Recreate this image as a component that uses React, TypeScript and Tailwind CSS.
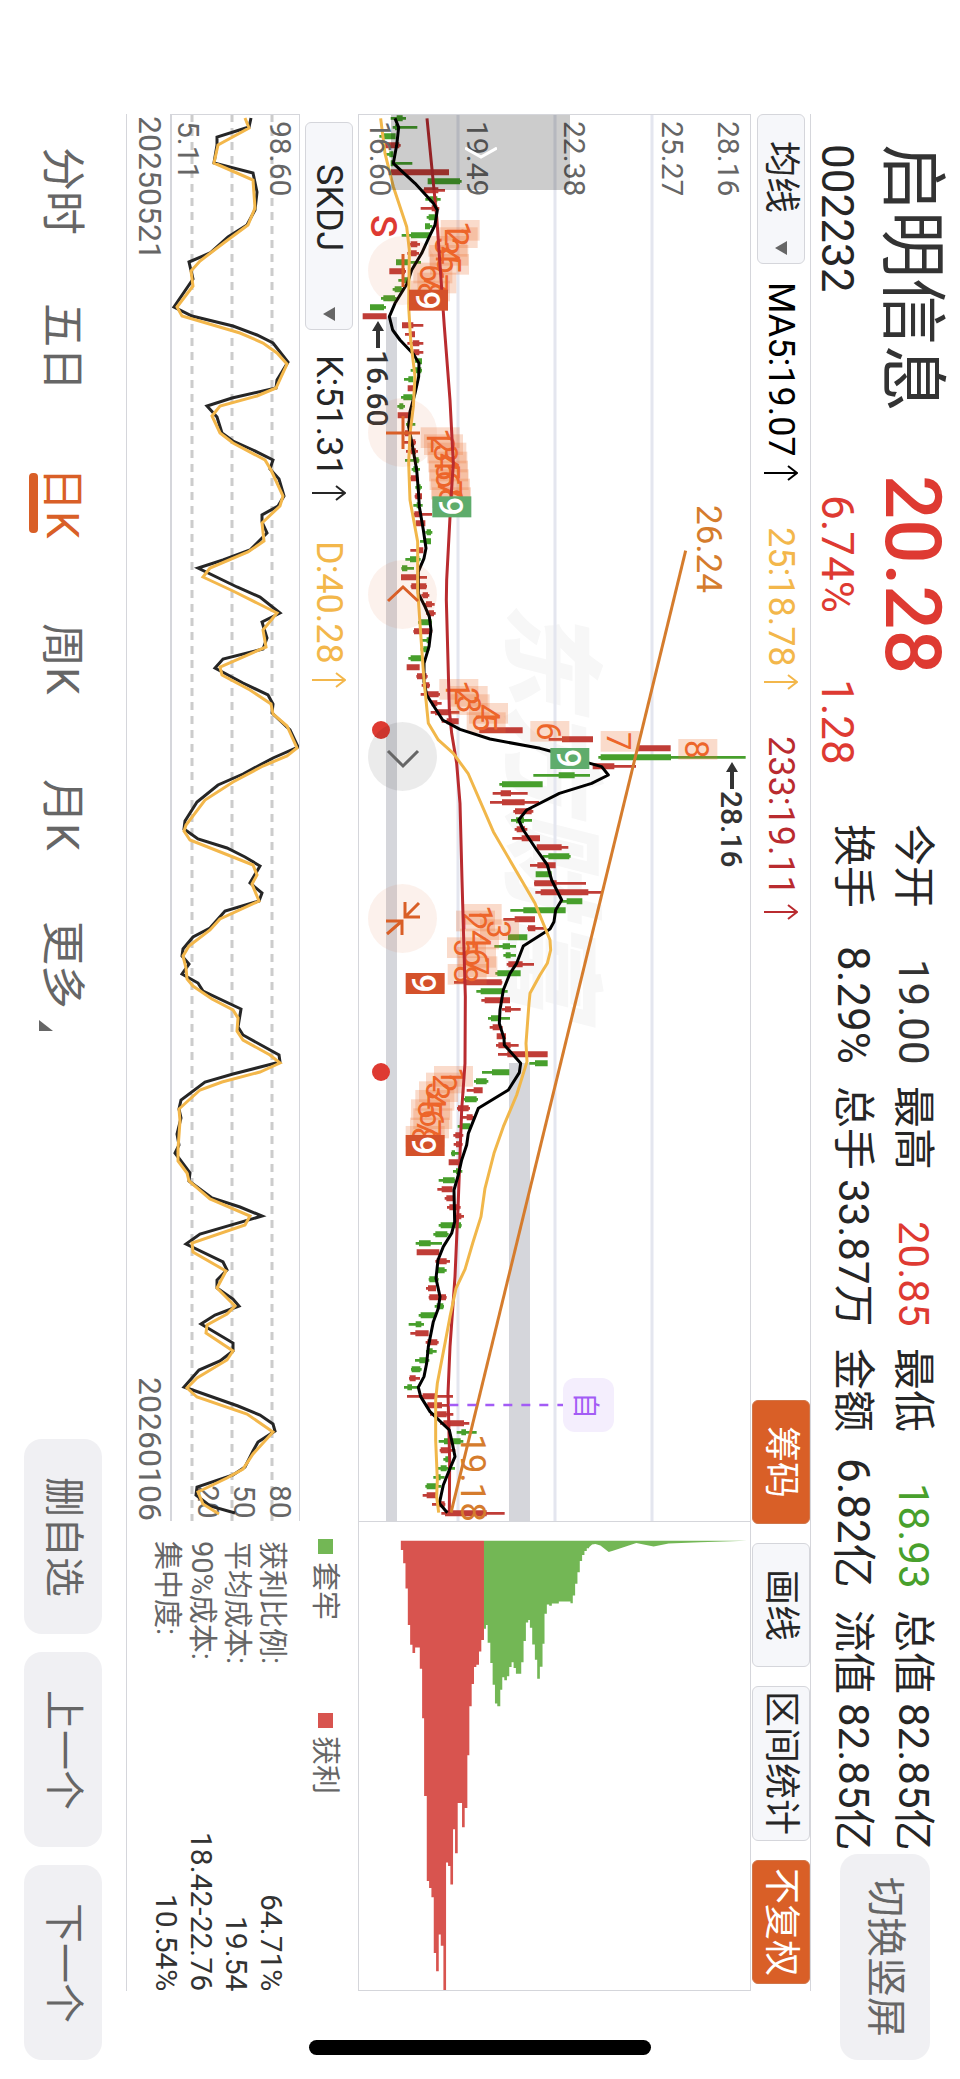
import React, { useState } from 'react';
import clsx from 'clsx';

// The whole screen is laid out in landscape: the inline axis runs top to bottom,
// the block axis right to left. Charts are drawn directly in screen coordinates.

type Candle = [kind: 'r' | 'g', low: number, high: number, bodyLow: number, bodyHigh: number];

// plot units are a third of a pixel
const CANDLES: Candle[] = [
  ['g', 122, 168, 140, 158], ['g', 128, 202, 135, 142], ['g', 88, 137, 98, 137], ['r', 100, 152, 104, 148],
  ['g', 105, 130, 118, 130], ['g', 122, 187, 122, 130], ['r', 122, 297, 122, 297], ['g', 233, 335, 233, 330],
  ['r', 220, 285, 222, 265], ['g', 226, 272, 238, 262], ['r', 212, 268, 245, 262], ['g', 230, 256, 236, 256],
  ['g', 225, 247, 225, 240], ['g', 155, 240, 183, 240], ['r', 180, 210, 182, 202], ['r', 172, 207, 182, 200],
  ['g', 138, 213, 138, 175], ['r', 118, 168, 118, 165], ['g', 145, 180, 158, 175], ['g', 128, 160, 134, 155],
  ['g', 93, 140, 100, 135], ['g', 60, 108, 60, 102], ['r', 38, 110, 38, 110], ['r', 156, 220, 156, 190],
  ['r', 165, 195, 178, 195], ['r', 172, 220, 188, 208], ['r', 185, 220, 190, 208], ['g', 195, 216, 203, 216],
  ['g', 182, 216, 195, 214], ['g', 162, 190, 175, 190], ['r', 173, 192, 173, 192], ['g', 153, 190, 160, 188],
  ['g', 142, 165, 148, 160], ['r', 143, 178, 143, 178], ['g', 168, 196, 172, 182], ['r', 160, 185, 165, 180],
  ['r', 160, 198, 180, 196], ['r', 168, 204, 182, 198], ['g', 165, 208, 195, 206], ['g', 185, 210, 190, 204],
  ['r', 180, 205, 182, 204], ['g', 196, 216, 200, 212], ['r', 194, 216, 196, 216], ['g', 190, 218, 200, 210],
  ['r', 190, 246, 193, 215], ['r', 197, 226, 197, 226], ['g', 226, 247, 230, 243], ['g', 210, 243, 222, 243],
  ['r', 181, 220, 205, 220], ['g', 166, 212, 180, 208], ['g', 154, 192, 156, 172], ['r', 153, 231, 153, 200],
  ['r', 182, 231, 184, 229], ['r', 214, 238, 218, 234], ['r', 220, 254, 228, 246], ['r', 228, 257, 235, 252],
  ['g', 204, 246, 213, 245], ['r', 190, 247, 192, 240], ['g', 216, 240, 230, 240], ['g', 212, 238, 220, 234],
  ['g', 175, 216, 182, 214], ['r', 170, 209, 170, 209], ['r', 199, 233, 201, 230], ['r', 215, 240, 222, 238],
  ['r', 212, 270, 230, 266], ['r', 245, 275, 245, 262], ['r', 242, 328, 255, 298], ['r', 275, 326, 290, 326],
  ['r', 388, 518, 388, 518], ['r', 596, 729, 636, 729], ['r', 862, 962, 862, 962], ['g', 745, 1187, 752, 963],
  ['r', 728, 858, 728, 793], ['g', 550, 720, 626, 674], ['g', 448, 578, 456, 578], ['r', 428, 533, 452, 483],
  ['r', 420, 567, 456, 524], ['r', 490, 550, 495, 545], ['g', 483, 546, 498, 522], ['r', 494, 532, 500, 525],
  ['r', 487, 570, 515, 570], ['r', 560, 655, 560, 635], ['g', 578, 662, 595, 658], ['r', 540, 617, 562, 617],
  ['g', 557, 605, 557, 605], ['r', 552, 708, 553, 620], ['r', 556, 757, 572, 715], ['g', 635, 697, 650, 697],
  ['g', 481, 647, 520, 647], ['r', 460, 555, 494, 555], ['r', 532, 585, 534, 556], ['g', 474, 532, 474, 532],
  ['g', 433, 498, 458, 480], ['g', 460, 498, 467, 482], ['r', 470, 552, 475, 518], ['g', 436, 512, 442, 512],
  ['r', 312, 457, 348, 455], ['g', 379, 473, 392, 460], ['r', 394, 480, 404, 480], ['r', 456, 512, 465, 483],
  ['g', 414, 480, 423, 450], ['r', 419, 458, 428, 450], ['r', 440, 468, 440, 468], ['r', 438, 506, 445, 482],
  ['r', 444, 593, 472, 593], ['g', 538, 593, 555, 593], ['g', 396, 478, 426, 478], ['g', 372, 415, 378, 410],
  ['r', 350, 398, 371, 398], ['g', 342, 384, 345, 380], ['r', 321, 360, 324, 356], ['r', 332, 372, 350, 368],
  ['g', 323, 362, 336, 360], ['r', 310, 340, 316, 335], ['r', 311, 338, 318, 334], ['g', 303, 327, 305, 315],
  ['r', 296, 326, 296, 326], ['g', 309, 337, 318, 330], ['g', 266, 315, 279, 314], ['r', 262, 308, 275, 308],
  ['r', 284, 312, 289, 310], ['r', 291, 332, 298, 328], ['r', 314, 342, 320, 334], ['g', 266, 335, 272, 333],
  ['g', 250, 296, 256, 292], ['g', 197, 276, 207, 242], ['r', 200, 268, 200, 268], ['r', 256, 300, 260, 290],
  ['g', 258, 290, 262, 284], ['g', 236, 266, 238, 264], ['r', 228, 258, 234, 258], ['r', 236, 290, 238, 288],
  ['g', 254, 282, 260, 280], ['g', 206, 260, 212, 256], ['g', 176, 222, 197, 214], ['r', 181, 236, 196, 236],
  ['r', 227, 266, 232, 262], ['g', 228, 260, 236, 248], ['g', 195, 238, 208, 234], ['g', 183, 215, 185, 211],
  ['r', 177, 210, 179, 197], ['g', 162, 204, 172, 186], ['r', 171, 309, 218, 258], ['r', 225, 298, 232, 276],
  ['r', 240, 310, 255, 290], ['r', 270, 358, 280, 342], ['g', 320, 380, 334, 348], ['g', 266, 340, 282, 332],
  ['r', 269, 316, 272, 300], ['g', 280, 298, 286, 296], ['g', 263, 315, 272, 290], ['g', 250, 284, 262, 272],
  ['g', 226, 274, 230, 260], ['r', 218, 262, 230, 260], ['r', 246, 286, 262, 284], ['r', 274, 464, 285, 410],
];

const MA5 =
  '135,55 146,82 140,136 130,190 195,250 250,310 262,330 255,375 238,410 215,460 185,510 172,550 135,610 118,650 128,690 150,720 190,762 207,790 206,830 195,880 180,935 176,980 186,1030 200,1110 205,1170 208,1220 220,1290 228,1345 222,1375 205,1415 205,1480 225,1520 238,1550 243,1590 237,1640 222,1690 222,1745 230,1785 278,1860 330,1888 420,1917 570,1945 600,1953 720,1990 755,2000 775,2025 725,2050 628,2080 530,2130 506,2160 520,2190 560,2250 592,2295 605,2340 635,2400 617,2430 612,2465 600,2487 520,2538 500,2590 480,2620 460,2670 450,2730 448,2770 462,2815 463,2835 512,2890 508,2918 475,2970 385,3025 355,3100 350,3135 335,3180 325,3225 312,3270 314,3365 305,3400 280,3440 264,3480 258,3535 270,3590 265,3625 250,3665 235,3740 230,3790 222,3830 205,3862 212,3890 240,3935 298,3990 307,4030 315,4070 300,4105 280,4155 268,4210 292,4238';
const MA25 =
  '92,55 105,160 130,260 170,380 178,450 176,620 182,720 195,830 190,920 180,1000 176,1090 180,1200 190,1255 203,1325 203,1470 212,1600 222,1740 235,1870 265,1920 310,1960 355,2022 430,2195 520,2350 555,2410 600,2520 602,2550 592,2590 570,2625 540,2680 537,2710 528,2830 531,2885 500,2985 460,3080 432,3160 405,3265 393,3350 368,3430 345,3508 318,3565 300,3650 285,3730 262,3850 257,3900 257,4020 262,4140 260,4190 266,4238';
const MA233 =
  '231,55 260,350 283,680 300,900 310,1090 303,1195 290,1440 289,1500 298,1830 305,1900 320,1990 330,2110 336,2340 346,2690 345,2890 335,3030 325,3300 315,3530 300,3740 294,3880 299,4080 298,4238';

// nine-turn counts: 1 to 8 are faint, the ninth is solid
const NINE_TURNS: { solid: string; last: [number, number]; counts: [number, number][] }[] = [
  { solid: '#d4512a', last: [177, 569], counts: [[272, 360], [266, 382], [235, 408], [238, 435], [240, 462], [190, 488], [202, 518], [183, 542]] },
  { solid: '#5fac6c', last: [247, 1189], counts: [[212, 982], [222, 1003], [232, 1028], [235, 1055], [237, 1082], [239, 1108], [243, 1136], [246, 1162]] },
  { solid: '#5fac6c', last: [601, 1944], counts: [[268, 1737], [296, 1758], [302, 1783], [357, 1809], [350, 1837], [541, 1863], [752, 1893], [985, 1917]] },
  { solid: '#d4512a', last: [167, 2619], counts: [[338, 2412], [318, 2432], [390, 2458], [330, 2486], [291, 2512], [321, 2541], [325, 2569], [293, 2592]] },
  { solid: '#d4512a', last: [167, 3105], counts: [[252, 2898], [228, 2918], [207, 2944], [196, 2970], [183, 2998], [190, 3025], [180, 3053], [167, 3078]] },
];

const CHIPS_PROFIT: [number, number][] = [
  [180, 150], [187, 190], [194, 266], [201, 376], [208, 435], [215, 460], [223, 443], [237, 507], [244, 656],
  [250, 890], [258, 1145], [265, 1166], [272, 1194], [279, 1362], [286, 1417], [294, 1306], [300, 1340],
  [308, 1473], [316, 1090], [322, 1100], [329, 1156], [337, 990], [343, 1062], [351, 911], [364, 984],
  [372, 926], [380, 767], [386, 620], [393, 553], [400, 502], [407, 495], [415, 455], [422, 421], [430, 122],
];
const CHIPS_LOSS: [number, number][] = [
  [430, 387], [436, 376], [441, 429], [449, 490], [456, 555], [463, 612], [470, 620], [479, 570], [485, 533],
  [491, 542], [499, 530], [506, 502], [513, 488], [519, 505], [526, 522], [542, 488], [549, 424], [556, 368],
  [563, 361], [568, 384], [575, 434], [583, 480], [590, 537], [598, 501], [606, 432], [612, 342], [619, 314],
  [626, 318], [634, 311], [655, 305], [690, 310], [697, 287], [704, 252], [711, 217], [718, 183], [725, 165],
  [732, 153], [739, 145], [746, 142],
];

const K_LINE =
  '251,118 249,127 217,137 217,145 214,163 253,173 257,192 255,210 247,225 228,237 210,253 189,262 193,279 174,307 192,316 233,326 257,335 273,343 288,362 277,380 276,388 232,398 207,406 217,417 222,433 233,441 253,450 273,460 270,469 279,479 284,496 278,506 262,515 262,522 267,533 250,550 223,560 198,568 237,587 260,597 280,613 262,622 267,638 263,649 223,659 215,668 243,683 268,695 273,704 272,713 290,730 298,747 273,758 243,774 218,785 197,802 185,821 184,829 198,839 227,848 245,857 260,866 250,883 262,893 259,901 225,911 210,928 193,937 183,949 182,956 189,964 182,974 198,983 203,991 241,1009 238,1027 243,1035 279,1055 280,1062 233,1074 205,1082 181,1100 179,1109 181,1118 177,1134 179,1145 175,1153 190,1173 189,1181 212,1198 240,1207 262,1216 200,1234 186,1244 223,1262 227,1270 217,1280 217,1288 233,1299 239,1306 215,1315 201,1324 233,1343 233,1351 220,1361 199,1370 184,1387 238,1406 260,1415 273,1424 275,1431 258,1442 253,1451 245,1467 233,1475 197,1487 196,1495 210,1506 235,1513';
const D_LINE =
  '245,118 249,128 218,145 214,163 253,180 255,208 248,225 225,242 200,261 191,271 193,286 177,307 182,316 240,333 263,343 277,353 287,364 276,388 257,396 220,406 212,416 220,433 233,443 265,460 271,470 283,496 280,506 262,523 264,541 248,552 210,568 203,577 233,591 257,603 277,613 263,630 266,647 220,667 222,675 250,690 271,704 273,714 287,726 297,748 287,756 263,766 233,782 205,800 186,825 184,831 190,840 233,857 253,865 257,875 252,884 259,901 220,919 210,930 189,946 183,956 186,968 187,979 193,986 212,999 233,1010 238,1018 237,1031 243,1040 270,1055 280,1063 260,1072 222,1082 200,1090 179,1109 180,1121 178,1149 178,1161 187,1173 189,1181 210,1199 250,1216 245,1225 192,1243 193,1252 226,1271 217,1288 235,1306 227,1314 207,1325 206,1333 233,1351 227,1360 197,1378 187,1388 197,1397 247,1414 273,1432 253,1454 243,1469 227,1478 198,1492 203,1504 219,1514';

const QUOTES = [
  { label: '今开', value: '19.00', color: 'text-[#333333]', size: 'text-[42px]' },
  { label: '最高', value: '20.85', color: 'text-[#de3a32]', size: 'text-[42px]' },
  { label: '最低', value: '18.93', color: 'text-[#48a02c]', size: 'text-[42px]' },
  { label: '总值', value: '82.85亿', color: 'text-[#262626]', size: 'text-[42px]' },
  { label: '换手', value: '8.29%', color: 'text-[#262626]', size: 'text-[44px]' },
  { label: '总手', value: '33.87万', color: 'text-[#262626]', size: 'text-[42px]' },
  { label: '金额', value: '6.82亿', color: 'text-[#262626]', size: 'text-[44px]' },
  { label: '流值', value: '82.85亿', color: 'text-[#262626]', size: 'text-[42px]' },
];

const CHIP_STATS = [
  ['获利比例:', '64.71%'],
  ['平均成本:', '19.54'],
  ['90%成本:', '18.42-22.76'],
  ['集中度:', '10.54%'],
];

const PERIODS = ['分时', '五日', '日K', '周K', '月K', '更多'];

const steps = (bars: [number, number][]) => {
  let d = `M${bars[0][0]} 122`;
  bars.forEach(([x, y]) => {
    d += `H${x}V${y}`;
  });
  return d;
};

interface SideTextProps {
  x: number;
  y: number;
  size?: number;
  fill?: string;
  weight?: number;
  children: React.ReactNode;
}

const SideText: React.FC<SideTextProps> = ({ x, y, size = 30, fill = '#666666', weight = 400, children }) => (
  <text transform={`translate(${x} ${y}) rotate(90)`} fontSize={size} fontWeight={weight} fill={fill}>
    {children}
  </text>
);

const Rise: React.FC = () => (
  <svg className="w-[34px] h-4 shrink-0" viewBox="0 0 34 16" fill="none" stroke="currentColor" strokeWidth="2">
    <path d="M0 8H33M24 1L33 8L24 15" />
  </svg>
);

interface IndicatorSelectProps {
  label: string;
  options: string[];
  className: string;
}

const IndicatorSelect: React.FC<IndicatorSelectProps> = ({ label, options, className }) => (
  <div className={clsx('relative w-12', className)}>
    <select
      aria-label={label}
      className="appearance-none size-full rounded-md border border-[#d5d6db] bg-[#f6f7fa] text-[36px] leading-[46px] text-[#262626]"
    >
      {options.map((o) => (
        <option key={o}>{o}</option>
      ))}
    </select>
    <svg className="pointer-events-none absolute bottom-[9px] left-[18px] w-3 h-[14px]" viewBox="0 0 12 14">
      <path d="M0 7L12 0V14Z" fill="#666666" />
    </svg>
  </div>
);

const Average: React.FC<{ className: string; children: React.ReactNode }> = ({ className, children }) => (
  <span className={clsx('flex items-center gap-2 text-[36px] leading-[46px]', className)}>
    {children}
    <Rise />
  </span>
);

const PriceChart: React.FC = () => (
  <svg className="block size-full [writing-mode:horizontal-tb]" viewBox="359 115 391 1406">
    <text
      transform="translate(514 602) rotate(90)"
      fontSize="103"
      fontWeight="900"
      fontStyle="italic"
      fill="#f7f7f7"
    >
      东方财富
    </text>
    <g stroke="#e4e6ef" strokeWidth="3">
      <path d="M458 114V1521M555 114V1521M652 114V1521" />
    </g>
    <path d="M386 317H397V1521H386ZM509 1063H530V1521H509Z" fill="#d5d6db" />
    <g transform="translate(350 100) scale(0.33333)">
      {CANDLES.map(([kind, low, high, bodyLow, bodyHigh], i) => {
        const y = 55 + i * 27;
        return (
          <path
            key={i}
            d={`M${low} ${y - 4}H${high}V${y + 4}H${low}ZM${bodyLow} ${y - 9}H${bodyHigh}V${y + 9}H${bodyLow}Z`}
            fill={kind === 'r' ? '#c03d37' : '#479f2c'}
          />
        );
      })}
      {NINE_TURNS.map(({ counts }) =>
        counts.map(([x, y]) => (
          <rect key={y} x={x} y={y} width="117" height="62" fill="#ed7031" opacity="0.25" />
        ))
      )}
    </g>
    {NINE_TURNS.map(({ counts }) =>
      counts.map(([x, y], i) => (
        <SideText key={y} x={350 + Math.round((x + 20) / 3)} y={100 + Math.round((y + 3) / 3)} size={33} fill="#ed652a">
          {i + 1}
        </SideText>
      ))
    )}
    <g transform="translate(350 100) scale(0.33333)" fill="none" strokeWidth="9" strokeLinejoin="round">
      <polyline points={MA233} stroke="#b92b2f" />
      <polyline points={MA5} stroke="#000000" />
      <polyline points={MA25} stroke="#f1b74a" />
      <path d="M1007 1352L303 4238" stroke="#d57c2d" />
      <path d="M298 3915H640" stroke="#a35cf5" strokeWidth="8" strokeDasharray="27 27" />
    </g>
    {/* the ninth count stays above the averages */}
    {NINE_TURNS.map(({ solid, last: [x, y] }) => (
      <g key={y}>
        <rect x={350 + x / 3} y={100 + y / 3} width="39" height="21" fill={solid} />
        <SideText x={350 + Math.round((x + 20) / 3)} y={100 + Math.round((y + 3) / 3)} size={33} weight={500} fill="#ffffff">
          9
        </SideText>
      </g>
    ))}
    <SideText x={370} y={121}>16.60</SideText>
    <SideText x={467} y={121}>19.49</SideText>
    <SideText x={564} y={121}>22.38</SideText>
    <SideText x={662} y={121}>25.27</SideText>
    <SideText x={718} y={121}>28.16</SideText>
    <SideText x={371} y={215} size={37} weight={500} fill="#de3a32">S</SideText>
    <SideText x={697} y={505} size={35} fill="#d57c2d">26.24</SideText>
    <SideText x={461} y={1434} size={35} fill="#d57c2d">19.18</SideText>
    <SideText x={367} y={350} weight={500} fill="#333333">16.60</SideText>
    <SideText x={721} y={791} weight={500} fill="#333333">28.16</SideText>
    <g fill="#333333">
      <path d="M378 321L384 331H380V348H376V331H372Z" />
      <path d="M732 762L738 772H734V789H730V772H726Z" />
    </g>
    <g fill="#de3a32">
      <circle cx="381" cy="730" r="9" />
      <circle cx="381" cy="1072" r="9" />
    </g>
    <rect x="563" y="1378" width="51" height="54" rx="12" fill="#f4eefd" />
    <SideText x={576} y={1392} size={27} fill="#a35cf5">自</SideText>
  </svg>
);

const ChartTools: React.FC = () => {
  const tools = [
    { name: '缩小', d: 'M35 18V51' },
    { name: '放大', d: 'M35 18V51M18 35H52' },
    { name: '上翻', d: 'M20 41L35 27L50 41' },
    { name: '下翻', d: 'M20 29L35 44L50 29' },
    { name: '收起', d: 'M37 18V33H52M37 33L51 19M18 37H34V51M34 37L19 50' },
  ];
  return (
    <div className="absolute top-[121px] left-[9px] flex gap-[93px]">
      {tools.map(({ name, d }) => (
        <button
          key={name}
          aria-label={name}
          className={clsx('size-[69px] rounded-full', name === '下翻' ? 'bg-black/8 text-[#666666]' : 'bg-[#db6027]/9 text-[#d95f27]')}
        >
          <svg className="size-full" viewBox="0 0 69 69" fill="none" stroke="currentColor" strokeWidth="3">
            <path d={d} />
          </svg>
        </button>
      ))}
    </div>
  );
};

const ChipChart: React.FC = () => (
  <svg className="block size-full" viewBox="359 1522 390 469">
    <g transform="translate(340 1500) scale(0.33333)">
      <path d={steps(CHIPS_PROFIT) + 'Z'} fill="#d8544f" />
      <path
        d={steps(CHIPS_LOSS) + 'L755 134L765 132L780 137L805 156L820 152L888 129L910 134L940 140L985 131L1080 127L1220 122Z'}
        fill="#73b755"
      />
    </g>
  </svg>
);

const SkdjChart: React.FC = () => (
  <svg className="block size-full [writing-mode:horizontal-tb]" viewBox="172 115 127 1406">
    <path d="M192 114V1522M232 114V1522M272 114V1522" stroke="#cccccc" strokeWidth="3" strokeDasharray="8 6" />
    <SideText x={270} y={121}>98.60</SideText>
    <SideText x={178} y={121}>5.11</SideText>
    <SideText x={270} y={1485}>80</SideText>
    <SideText x={234} y={1485}>50</SideText>
    <SideText x={198} y={1485}>20</SideText>
    <g fill="none" strokeWidth="3">
      <polyline points={K_LINE} stroke="#262626" />
      <polyline points={D_LINE} stroke="#f3b74b" />
    </g>
  </svg>
);

const toolButton = 'rounded-md border text-[36px] leading-[56px] text-center';
const plain = 'border-[#d5d6db] bg-[#f6f7fa] text-[#262626]';
const filled = 'border-[#d0764a] bg-[#d95f27] text-white';
const pill = 'rounded-[18px] bg-[#f0f0f3] text-[40px] text-[#666666] text-center';

export default function App() {
  const [period, setPeriod] = useState('日K');

  return (
    <div className="relative flex flex-col w-full h-screen overflow-hidden bg-white text-[#262626] [writing-mode:vertical-rl] [text-orientation:sideways] font-[Roboto,'Noto_Sans_CJK_SC',sans-serif]">
      <header className="flex w-[149px] pt-36 pb-[19px] items-start">
        <div className="grid grid-cols-[331px_349px] pr-3 gap-y-[17px]">
          <h1 className="text-[67px] leading-[72px] text-[#333333]">启明信息</h1>
          <strong className="text-[78px] leading-[72px] font-medium text-[#de3a32]">20.28</strong>
          <span className="text-[44px] leading-[44px]">002232</span>
          <span className="flex gap-[66px] pt-5 text-[44px] leading-[44px] text-[#de3a32]">
            <span>6.74%</span>
            <span>1.28</span>
          </span>
        </div>
        <dl className="grid flex-1 grid-cols-4 gap-x-[22px] pr-[17px]">
          {QUOTES.map(({ label, value, color, size }) => (
            <div key={label} className="flex justify-between whitespace-nowrap leading-[60px]">
              <dt className="text-[42px]">{label}</dt>
              <dd className={clsx(color, size)}>{value}</dd>
            </div>
          ))}
        </dl>
        <button className={clsx(pill, 'mr-[30px] mt-1 w-[90px] h-[206px]')}>切换竖屏</button>
      </header>

      {/* border-x and border-y are logical here, so the physical sides are named */}
      <main className="flex flex-1 flex-col mt-[114px] mb-[88px] min-w-0">
        <div className="flex w-[61px] items-center border-l border-r border-[#d5d6db] pb-[7px]">
          <IndicatorSelect label="主图指标" options={['均线', 'BOLL']} className="h-[150px] [&>select]:pt-[26px]" />
          <div className="flex flex-1 gap-[46px] pt-[18px]">
            <Average className="text-black">MA5:19.07</Average>
            <Average className="text-[#f3b74b]">25:18.78</Average>
            <Average className="text-[#b92b2f]">233:19.11</Average>
          </div>
          <div className="flex gap-[19px]">
            <button className={clsx(toolButton, filled, 'h-[124px]')}>筹码</button>
            <button className={clsx(toolButton, plain, 'h-[124px]')}>画线</button>
            <button className={clsx(toolButton, plain, 'h-[155px]')}>区间统计</button>
            <button className={clsx(toolButton, filled, 'h-[124px]')}>不复权</button>
          </div>
        </div>

        <div className="grid flex-1 min-w-0 grid-cols-[minmax(0,1fr)_470px]">
          <section className="relative min-w-0 border-t border-l border-[#d5d6db]">
            <PriceChart />
            <button
              aria-label="展开"
              className="absolute top-0 left-[32px] flex w-[179px] h-[75px] items-center justify-center rounded-br-lg bg-black/20"
            >
              <svg className="w-8 h-3" viewBox="0 0 32 12" fill="none" stroke="#ffffff" strokeWidth="3">
                <path d="M0 1L16 10L32 1" />
              </svg>
            </button>
            <ChartTools />
          </section>
          <section className="min-w-0 border-t border-b border-l border-[#d5d6db]">
            <ChipChart />
          </section>
        </div>

        <div className="grid w-[232px] grid-cols-[minmax(0,1fr)_470px] border-l border-[#d5d6db]">
          <section className="flex flex-col">
            <div className="flex w-[58px] items-center pt-2">
              <IndicatorSelect label="副图指标" options={['SKDJ', 'MACD', 'KDJ']} className="h-[208px] [&>select]:pt-[41px]" />
              <div className="flex gap-10 pt-[25px]">
                <Average className="text-[#262626]">K:51.31</Average>
                <Average className="text-[#f3b74b]">D:40.28</Average>
              </div>
            </div>
            <div className="w-[130px] border border-b-0 border-l-2 border-[#d5d6db]">
              <SkdjChart />
            </div>
            <div className="flex flex-1 justify-between pt-[2px] text-[32px] leading-[40px] text-[#666666]">
              <time>20250521</time>
              <time>20260106</time>
            </div>
          </section>
          <section className="pt-[18px] text-[#666666]">
            <div className="flex pr-[13px] gap-[93px] text-[29px] leading-[40px]">
              <span className="flex items-center gap-2">
                <i className="size-[15px] bg-[#73b755]" />
                套牢
              </span>
              <span className="flex items-center gap-2">
                <i className="size-[15px] bg-[#d8544f]" />
                获利
              </span>
            </div>
            <dl className="mr-4 pt-[2px] text-[29px] leading-[35px]">
              {CHIP_STATS.map(([label, value]) => (
                <div key={label} className="flex justify-between">
                  <dt>{label}</dt>
                  <dd className="text-[30px] text-[#333333]">{value}</dd>
                </div>
              ))}
            </dl>
          </section>
        </div>
      </main>

      <footer className="flex w-[126px] items-center justify-between pt-[113px] pb-[19px]">
        <nav className="grid grid-cols-6 h-[936px] pr-[2px]">
          {PERIODS.map((p) => (
            <button
              key={p}
              onClick={() => setPeriod(p)}
              className={clsx(
                'relative text-[44px] leading-[66px] text-center',
                p === period ? 'text-[#d95f27]' : 'text-[#666666]',
                p === '更多' && 'pb-3'
              )}
            >
              {p}
              {p === period && <i className="absolute left-0 top-1/2 h-[60px] w-[9px] -translate-y-1/2 rounded bg-[#d95f27]" />}
              {p === '更多' && (
                <svg className="absolute left-[10px] bottom-[18px] w-[14px] h-[11px]" viewBox="0 0 14 11">
                  <path d="M0 0V11H14Z" fill="#666666" />
                </svg>
              )}
            </button>
          ))}
        </nav>
        <div className="flex gap-[18px]">
          <button className={clsx(pill, 'w-[78px] h-[195px]')}>删自选</button>
          <button className={clsx(pill, 'w-[78px] h-[195px]')}>上一个</button>
          <button className={clsx(pill, 'w-[78px] h-[195px]')}>下一个</button>
        </div>
      </footer>

      <div className="absolute bottom-6 left-1/2 h-[15px] w-[342px] -translate-x-1/2 rounded-full bg-black" />
    </div>
  );
}
